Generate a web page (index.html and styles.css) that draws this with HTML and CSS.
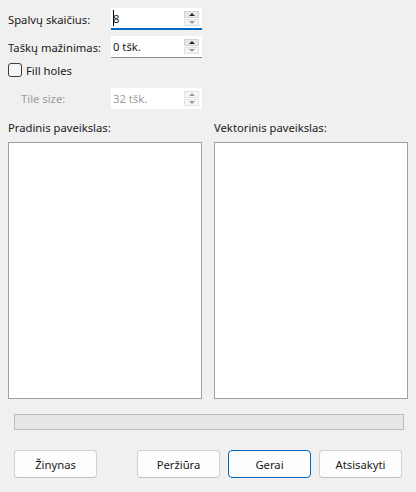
FILE: index.html
```html
<!DOCTYPE html>
<html lang="lt">
<head>
    <meta charset="UTF-8">
    <title>Vektorizavimas</title>
    <link rel="stylesheet" href="styles.css">
</head>
<body>
    <div class="dialog">
        <!-- Settings -->
        <div class="row first">
            <label class="label">Spalvų skaičius:</label>
            <div class="spin focused">
                <span class="value"><span class="caret"></span>8</span>
                <div class="arrows">
                    <span class="arrow up"></span>
                    <span class="arrow down off"></span>
                </div>
            </div>
        </div>
        <div class="row">
            <label class="label">Taškų mažinimas:</label>
            <div class="spin">
                <span class="value">0 tšk.</span>
                <div class="arrows">
                    <span class="arrow up"></span>
                    <span class="arrow down off"></span>
                </div>
            </div>
        </div>
        <div class="check-row">
            <span class="checkbox"></span>
            <span>Fill holes</span>
        </div>
        <div class="row disabled">
            <label class="label indent">Tile size:</label>
            <div class="spin short">
                <span class="value">32 tšk.</span>
                <div class="arrows">
                    <span class="arrow up off"></span>
                    <span class="arrow down off"></span>
                </div>
            </div>
        </div>

        <!-- Previews -->
        <div class="previews">
            <div class="preview">
                <p>Pradinis paveikslas:</p>
                <div class="canvas"></div>
            </div>
            <div class="preview">
                <p>Vektorinis paveikslas:</p>
                <div class="canvas"></div>
            </div>
        </div>

        <div class="progress"></div>

        <div class="buttons">
            <button class="help">Žinynas</button>
            <button>Peržiūra</button>
            <button class="default">Gerai</button>
            <button>Atsisakyti</button>
        </div>
    </div>
</body>
</html>
```

FILE: styles.css
```css
* {
    margin: 0;
    padding: 0;
    box-sizing: border-box;
}
body {
    background-color: #f0f0f0;
    color: #1a1a1a;
    font-family: 'Noto Sans', 'Open Sans', sans-serif;
    font-size: 11.25px;
}
.dialog {
    width: 416px;
    height: 492px;
    padding: 8px 8px 0;
}
/* Settings rows */
.row {
    display: flex;
    align-items: center;
    height: 22px;
    margin-bottom: 6px;
}
.label {
    width: 103px;
}
.label.indent {
    padding-left: 13px;
}
.spin {
    display: flex;
    align-items: center;
    width: 91px;
    height: 22px;
    background-color: #ffffff;
    border-bottom: 1px solid #8a8a8a;
    padding-left: 2px;
}
.spin.focused {
    border-bottom: 2px solid #0067c0;
}
.spin.short {
    height: 21px;
    border-bottom: none;
}
.value {
    flex: 1;
    display: flex;
    align-items: center;
}
.caret {
    display: inline-block;
    width: 1px;
    height: 16px;
    background-color: #000;
    margin-right: -1px;
}
.arrows {
    display: flex;
    flex-direction: column;
    gap: 1px;
    margin-right: 3px;
}
.arrow {
    width: 15px;
    height: 7px;
    background-color: #e8e8e8;
    border: 1px solid #d2d2d2;
    display: flex;
    align-items: center;
    justify-content: center;
}
.arrow::after {
    content: '';
    border-left: 3px solid transparent;
    border-right: 3px solid transparent;
}
.arrow.up::after {
    border-bottom: 3px solid #222;
}
.arrow.down::after {
    border-top: 3px solid #222;
}
.arrow.off {
    background-color: #f3f3f3;
    border-color: #e2e2e2;
}
.arrow.up.off::after {
    border-bottom-color: #9a9a9a;
}
.arrow.down.off::after {
    border-top-color: #9a9a9a;
}
.disabled {
    color: #9d9d9d;
}
.disabled .arrow {
    background-color: #f7f7f7;
}
/* Checkbox */
.check-row {
    display: flex;
    align-items: center;
    gap: 4px;
    height: 14px;
    margin: 0 0 9px;
    position: relative;
    top: -1px;
}
.checkbox {
    width: 14px;
    height: 14px;
    border: 1px solid #3c3c3c;
    border-radius: 3px;
    background-color: #f6f6f6;
}
/* Preview boxes */
.previews {
    display: flex;
    gap: 12px;
    margin-top: 11px;
}
.preview {
    flex: 1;
}
.preview p {
    line-height: 16px;
    margin-bottom: 6px;
}
.canvas {
    height: 257px;
    background-color: #ffffff;
    border: 1px solid #a0a0a0;
}
/* Progress */
.progress {
    margin: 15px 4px 0 6px;
    height: 16px;
    background-color: #e6e6e6;
    border: 1px solid #bcbcbc;
}
/* Buttons */
.buttons {
    display: flex;
    gap: 8px;
    margin: 20px 6px 0 6px;
}
button {
    width: 83px;
    height: 28px;
    font-family: inherit;
    font-size: 11.25px;
    color: #1a1a1a;
    background-color: #fdfdfd;
    border: 1px solid #d0d0d0;
    border-bottom-color: #c0c0c0;
    border-radius: 4px;
}
button.help {
    margin-right: auto;
}
button.default {
    border: 1px solid #0067c0;
}
```
